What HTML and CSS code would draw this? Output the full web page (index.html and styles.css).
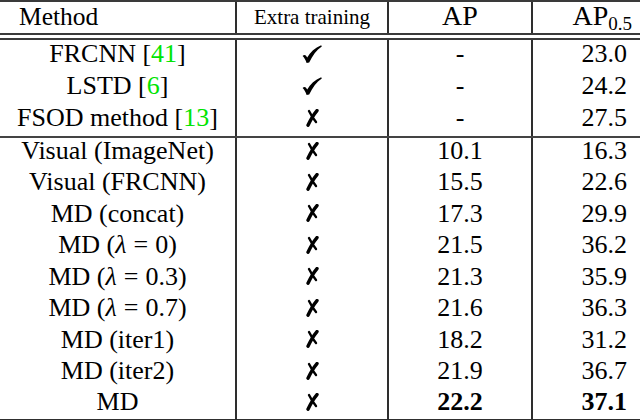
FILE: index.html
```html
<!DOCTYPE html>
<html>
<head>
<meta charset="utf-8">
<link rel="stylesheet" href="styles.css">
</head>
<body>
<svg width="0" height="0" class="defs">
  <defs>
    <symbol id="chk" viewBox="0 0 20 18">
      <path d="M0.6,11 C2.2,9.4 3.8,9.8 5.2,12.6 C8.2,7 13,2.6 19.2,0.2 L19.8,1.4 C14.4,5 10.4,10.4 7.2,17.6 L4.6,17.9 C3.6,15 2.2,12.6 0.6,11 Z" fill="#000"/>
    </symbol>
    <symbol id="crs" viewBox="0 0 13 18">
      <path d="M11,1.6 C7.6,5.6 4.6,10.8 2,16.2" stroke="#000" stroke-width="3.4" stroke-linecap="round" fill="none"/>
      <path d="M3,2 C4.8,5.6 7,9.4 10,13" stroke="#000" stroke-width="2.4" stroke-linecap="round" fill="none"/>
    </symbol>
  </defs>
</svg>
<table class="results">
  <colgroup>
    <col class="w1">
    <col class="w2">
    <col class="w3">
    <col class="w4">
  </colgroup>
  <thead>
    <tr>
      <th class="c-method">Method</th>
      <th class="c-extra">Extra training</th>
      <th class="c-ap">AP</th>
      <th class="c-ap5">AP<sub>0.5</sub></th>
    </tr>
  </thead>
  <tbody>
    <tr class="gap"><td colspan="4"></td></tr>
    <tr class="g1">
      <td class="c-name">FRCNN [<span class="cite">41</span>]</td>
      <td class="c-mark"><svg class="chk"><use href="#chk"/></svg></td>
      <td class="c-ap">-</td>
      <td class="c-ap5">23.0</td>
    </tr>
    <tr class="g1">
      <td class="c-name">LSTD [<span class="cite">6</span>]</td>
      <td class="c-mark"><svg class="chk"><use href="#chk"/></svg></td>
      <td class="c-ap">-</td>
      <td class="c-ap5">24.2</td>
    </tr>
    <tr class="g1 last-of-group">
      <td class="c-name">FSOD method [<span class="cite">13</span>]</td>
      <td class="c-mark"><svg class="crs"><use href="#crs"/></svg></td>
      <td class="c-ap">-</td>
      <td class="c-ap5">27.5</td>
    </tr>
    <tr class="g2">
      <td class="c-name">Visual (ImageNet)</td>
      <td class="c-mark"><svg class="crs"><use href="#crs"/></svg></td>
      <td class="c-ap">10.1</td>
      <td class="c-ap5">16.3</td>
    </tr>
    <tr class="g2">
      <td class="c-name">Visual (FRCNN)</td>
      <td class="c-mark"><svg class="crs"><use href="#crs"/></svg></td>
      <td class="c-ap">15.5</td>
      <td class="c-ap5">22.6</td>
    </tr>
    <tr class="g2">
      <td class="c-name">MD (concat)</td>
      <td class="c-mark"><svg class="crs"><use href="#crs"/></svg></td>
      <td class="c-ap">17.3</td>
      <td class="c-ap5">29.9</td>
    </tr>
    <tr class="g2">
      <td class="c-name">MD (<i>λ</i><span class="eq">=</span>0)</td>
      <td class="c-mark"><svg class="crs"><use href="#crs"/></svg></td>
      <td class="c-ap">21.5</td>
      <td class="c-ap5">36.2</td>
    </tr>
    <tr class="g2">
      <td class="c-name">MD (<i>λ</i><span class="eq">=</span>0.3)</td>
      <td class="c-mark"><svg class="crs"><use href="#crs"/></svg></td>
      <td class="c-ap">21.3</td>
      <td class="c-ap5">35.9</td>
    </tr>
    <tr class="g2">
      <td class="c-name">MD (<i>λ</i><span class="eq">=</span>0.7)</td>
      <td class="c-mark"><svg class="crs"><use href="#crs"/></svg></td>
      <td class="c-ap">21.6</td>
      <td class="c-ap5">36.3</td>
    </tr>
    <tr class="g2">
      <td class="c-name">MD (iter1)</td>
      <td class="c-mark"><svg class="crs"><use href="#crs"/></svg></td>
      <td class="c-ap">18.2</td>
      <td class="c-ap5">31.2</td>
    </tr>
    <tr class="g2">
      <td class="c-name">MD (iter2)</td>
      <td class="c-mark"><svg class="crs"><use href="#crs"/></svg></td>
      <td class="c-ap">21.9</td>
      <td class="c-ap5">36.7</td>
    </tr>
    <tr class="g2 final">
      <td class="c-name">MD</td>
      <td class="c-mark"><svg class="crs"><use href="#crs"/></svg></td>
      <td class="c-ap"><b>22.2</b></td>
      <td class="c-ap5"><b>37.1</b></td>
    </tr>
  </tbody>
</table>
</body>
</html>
```
FILE: styles.css
```css
html, body {
  margin: 0;
  padding: 0;
  background: #fff;
}
body {
  font-family: "Liberation Serif", "Times New Roman", serif;
  color: #000;
  width: 640px;
  height: 420px;
  overflow: hidden;
}
.defs {
  position: absolute;
  width: 0;
  height: 0;
}
.results {
  width: 640px;
  border-collapse: collapse;
  table-layout: fixed;
  font-size: 26px;
}
.w1 { width: 236px; }
.w2 { width: 152px; }
.w3 { width: 144px; }
.w4 { width: 108px; }
.results th,
.results td {
  padding: 0;
  font-weight: normal;
  vertical-align: middle;
  line-height: 26px;
}
.results thead tr {
  height: 33px;
}
.results thead th {
  border-top: 2px solid #3a3a3a;
  border-bottom: 2px solid #3a3a3a;
  padding-bottom: 2px;
}
.c-method {
  text-align: left;
  padding-left: 19px !important;
  font-size: 25.5px;
}
.c-extra {
  font-size: 21px;
  text-align: center;
}
.c-ap {
  text-align: center;
}
th.c-ap {
  font-size: 28px;
}
.c-ap5 {
  text-align: right;
  padding-right: 13px !important;
}
th.c-ap5 {
  font-size: 28px;
  padding-right: 8px !important;
}
th.c-ap5 sub {
  font-size: 19px;
  vertical-align: -5px;
  line-height: 0;
}
.results th + th,
.results td + td {
  border-left: 2px solid #2e2e2e;
}
.gap td {
  height: 3px;
  border-bottom: 2px solid #3a3a3a;
}
.results tbody tr.gap {
  height: 3px;
}
.results tbody tr.g1 {
  height: 32.5px;
}
.results tbody tr.g2 {
  height: 31.5px;
}
.last-of-group td {
  border-bottom: 2px solid #444;
}
.final td {
  border-bottom: 2px solid #2e2e2e;
}
.c-name {
  text-align: center;
  padding-bottom: 3px !important;
}
.c-ap, .c-ap5 {
  padding-bottom: 3px !important;
}
.cite {
  color: #00e400;
}
.eq {
  padding: 0 7px;
}
.c-mark {
  text-align: center;
}
.chk {
  display: block;
  width: 20px;
  height: 18px;
  margin: -3px auto 0;
}
.crs {
  display: block;
  width: 13px;
  height: 18px;
  margin: -4px auto 0;
}
b {
  font-weight: bold;
}
```
